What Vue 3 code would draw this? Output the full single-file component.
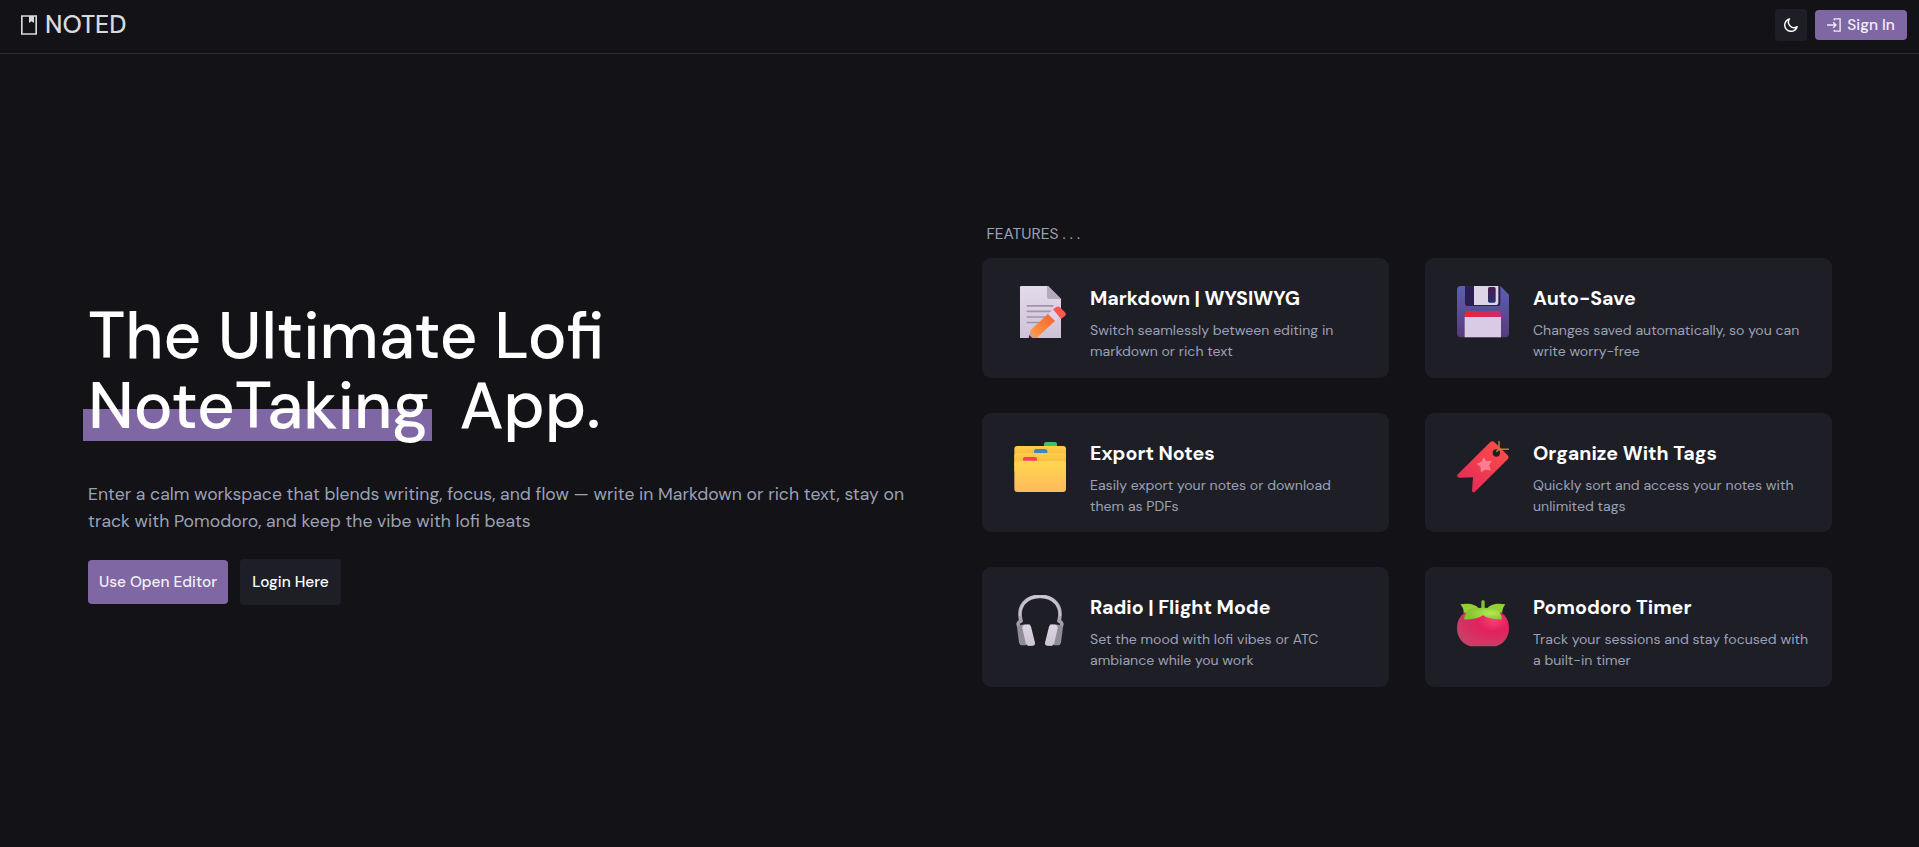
<script setup>
const features = [
  { icon: 'memo', title: 'Markdown | WYSIWYG', lines: ['Switch seamlessly between editing in', 'markdown or rich text'] },
  { icon: 'disk', title: 'Auto-Save', lines: ['Changes saved automatically, so you can', 'write worry-free'] },
  { icon: 'folder', title: 'Export Notes', lines: ['Easily export your notes or download', 'them as PDFs'] },
  { icon: 'tag', title: 'Organize With Tags', lines: ['Quickly sort and access your notes with', 'unlimited tags'] },
  { icon: 'phones', title: 'Radio | Flight Mode', lines: ['Set the mood with lofi vibes or ATC', 'ambiance while you work'] },
  { icon: 'tomato', title: 'Pomodoro Timer', lines: ['Track your sessions and stay focused with', 'a built-in timer'] },
]
</script>

<template>
  <div class="page">
    <header class="topbar">
      <div class="brand">
        <svg class="book" viewBox="0 0 16 20"><path d="M.8 1H15.200V19H.8Z" fill="none" stroke="#d9d9dc" stroke-width="1.700" /><path d="M8 1h5v7l-2.500-1.800L8 8Z" fill="#d9d9dc" /></svg>
        <span class="brand-name">NOTED</span>
      </div>
      <div class="actions">
        <button class="icon-btn" aria-label="Toggle theme">
          <svg width="14" height="14" viewBox="0 0 14 14"><path d="M5.400.9A6.300 6.300 0 1 0 13.100 8.700 5.600 5.600 0 0 1 5.400.9Z" fill="none" stroke="#fff" stroke-width="1.400" stroke-linejoin="round" /></svg>
        </button>
        <button class="sign-in">
          <svg width="14" height="14" viewBox="0 0 14 14" fill="none" stroke="#efeaf6" stroke-width="1.400"><path d="M7.300 2.200V.9h5.800v12.200H7.300v-1.300M0 7h8.800M6.200 4.200 9 7 6.200 9.800" /></svg>
          <span>Sign In</span>
        </button>
      </div>
    </header>

    <main class="content">
      <section class="hero">
        <h1>
          <span class="line">The Ultimate Lofi</span>
          <span class="line"><span class="mark">NoteTaking</span><span class="app">App.</span></span>
        </h1>
        <p class="lead">
          <span class="line">Enter a calm workspace that blends writing, focus, and flow — write in Markdown or rich text, stay on</span>
          <span class="line">track with Pomodoro, and keep the vibe with lofi beats</span>
        </p>
        <div class="cta">
          <button class="primary">Use Open Editor</button>
          <button class="secondary">Login Here</button>
        </div>
      </section>

      <section class="features">
        <h2>FEATURES . . .</h2>
        <div class="cards">
          <article v-for="f in features" :key="f.icon" class="card">
            <svg v-if="f.icon === 'memo'" class="art" viewBox="42 48 156 156">
              <defs>
                <linearGradient id="sheet" x1="0" y1="0" x2="0" y2="1"><stop offset="0" stop-color="#e3dbea" /><stop offset="1" stop-color="#cfc2d8" /></linearGradient>
                <linearGradient id="pencil" x1="0" y1="1" x2="1" y2="0"><stop offset="0" stop-color="#ffa04a" /><stop offset="1" stop-color="#f4602f" /></linearGradient>
              </defs>
              <path d="M60 52q0-4 4-4H144L183 87V204H60Z" fill="url(#sheet)" />
              <path d="M141 48h3L183 87H147q-6 0-6-6Z" fill="#b5a9bd" />
              <path d="M82 107.500H159M82 124H159M82 141H145M82 157.500H127" stroke="#a094aa" stroke-width="5" stroke-linecap="round" />
              <path d="M92 180 146 130 167 151 110 204H88Z" fill="url(#pencil)" />
              <path d="M92 180 110 204H86Z" fill="#d9a07e" />
              <path d="M88 195l9 9H86Z" fill="#4b1f4d" />
              <path d="M144 132 160 117 182 138 165 153Z" fill="#ded3ea" />
              <path d="M159 118 169 111q6-4 11 1l15 15q5 6 0 11l-12 9Z" fill="#fa5750" />
            </svg>
            <svg v-else-if="f.icon === 'disk'" class="art" viewBox="42 50 156 156">
              <defs>
                <linearGradient id="body" x1="0" y1="0" x2="0" y2="1"><stop offset="0" stop-color="#5a61b0" /><stop offset="1" stop-color="#593a7c" /></linearGradient>
                <linearGradient id="stripe"><stop offset="0" stop-color="#ed2431" /><stop offset="1" stop-color="#c92b70" /></linearGradient>
                <linearGradient id="slot" x1="0" y1="0" x2="0" y2="1"><stop offset="0" stop-color="#4d1a4b" /><stop offset="1" stop-color="#243070" /></linearGradient>
              </defs>
              <path d="M42 62q0-12 12-12H172L198 76V192q0 12-12 12H54q-12 0-12-12Z" fill="url(#body)" />
              <path d="M66 50H172V103q0 7-7 7H73q-7 0-7-7Z" fill="#2b1e52" />
              <path d="M93 50H166V101q0 6-6 6H93Z" fill="#ddd4e6" />
              <rect x="135" y="53" width="23" height="47" rx="5" fill="url(#slot)" />
              <path d="M65 134q0-9 9-9H165q9 0 9 9V146H65Z" fill="url(#stripe)" />
              <path d="M65 143H174V204H65Z" fill="#d9cae5" />
            </svg>
            <svg v-else-if="f.icon === 'folder'" class="art" viewBox="42 48 156 156">
              <defs>
                <linearGradient id="fold" x1="0" y1="0" x2="0" y2="1"><stop offset="0" stop-color="#ffd64e" /><stop offset="1" stop-color="#ffba5c" /></linearGradient>
                <linearGradient id="sheaf" x1="0" y1="0" x2="0" y2="1"><stop offset="0" stop-color="#ffcf45" /><stop offset=".4" stop-color="#f9bb45" /></linearGradient>
              </defs>
              <path d="M132 65V57q0-6 6-6H165q6 0 6 6V65Z" fill="#43bd69" />
              <rect x="43" y="63" width="155" height="60" rx="9" fill="url(#sheaf)" />
              <path d="M102 84V79q0-7 7-7H135q7 0 7 7V84Z" fill="#3f85c6" />
              <rect x="43" y="84" width="155" height="60" rx="9" fill="url(#sheaf)" />
              <path d="M69 108V102q0-6 6-6H105q6 0 6 6V108Z" fill="#ff3b63" />
              <rect x="43" y="107" width="155" height="94" rx="9" fill="url(#fold)" />
            </svg>
            <svg v-else-if="f.icon === 'tag'" class="art" viewBox="42 48 156 156">
              <defs>
                <linearGradient id="ribbon" x1="1" y1="0" x2="0" y2="1"><stop offset="0" stop-color="#ff5148" /><stop offset="1" stop-color="#e22659" /></linearGradient>
              </defs>
              <path fill-rule="evenodd" d="M43 149 142 51q6-5 12 0L194 91q5 6 0 12L96 200q-7 4-9-2L90 157 49 158q-8-1-6-9ZM171 84a11 11 0 1 0-22 0 11 11 0 1 0 22 0Z" fill="url(#ribbon)" />
              <path d="M168 45V73H198M168 73 160 80" fill="none" stroke="#c07a35" stroke-width="4.500" />
              <path d="m122 98 7 12 15-1-7 12 5 14-14-3-13 8-1-15-11-8 14-6Z" fill="#ff7d93" stroke="#ff7d93" stroke-width="3" stroke-linejoin="round" />
            </svg>
            <svg v-else-if="f.icon === 'phones'" class="art" viewBox="42 45 156 156">
              <defs>
                <linearGradient id="band" x1="0" y1="0" x2="0" y2="1"><stop offset="0" stop-color="#c3bcc7" /><stop offset="1" stop-color="#a09aa4" /></linearGradient>
                <linearGradient id="cup" x1="0" y1="0" x2="0" y2="1"><stop offset="0" stop-color="#ddd6e3" /><stop offset="1" stop-color="#cdc4d3" /></linearGradient>
              </defs>
              <path d="M57 140Q50 128 63 123C51 78 78 49 120 49S189 78 177 123Q190 128 183 140" fill="none" stroke="url(#band)" stroke-width="11" stroke-linejoin="round" />
              <path d="M59 108C61 72 85 49 120 49S179 72 181 108" fill="none" stroke="#d9d3dc" stroke-width="3" />
              <path d="M51 141q1-6 9-6l18-2V196H66q-7 0-9-8Z" fill="#918b96" />
              <path d="M189 141q-1-6-9-6l-18-2V196h12q7 0 9-8Z" fill="#918b96" />
              <path d="M67 143q0-8 8-9l9-1q7 0 9 7l12 48q1 8-7 9l-12 1q-7 0-9-8Z" fill="url(#cup)" />
              <path d="M173 143q0-8-8-9l-9-1q-7 0-9 7l-12 48q-1 8 7 9l12 1q7 0 9-8Z" fill="url(#cup)" />
            </svg>
            <svg v-else class="art" viewBox="42 44 156 156">
              <defs>
                <radialGradient id="fruit" cx=".7" cy=".28" r=".75"><stop offset="0" stop-color="#f2426f" /><stop offset=".4" stop-color="#e3205e" /><stop offset="1" stop-color="#cb3d66" /></radialGradient>
                <radialGradient id="leaf" cx=".7" cy=".45" r=".6"><stop offset="0" stop-color="#b6ea55" /><stop offset="1" stop-color="#86c42f" /></radialGradient>
              </defs>
              <path d="M42 143C42 110 62 91 95 91H145C178 91 198 110 198 143 198 172 182 190 158 198H82C58 190 42 172 42 143Z" fill="url(#fruit)" />
              <path d="M52 72C75 68 98 70 109 86L95 97H62Q63 84 52 72Z" fill="#93cf35" />
              <path d="M187 72C164 68 142 70 131 86L145 97H177Q177 84 187 72Z" fill="#93cf35" />
              <path d="M115 64q0-4 5-4t5 4V88H115Z" fill="#86c32c" />
              <path d="M63 117Q67 90 85 85Q120 80 157 85Q173 91 177 117Q137 119 120 105Q103 119 63 117Z" fill="url(#leaf)" />
            </svg>
            <div class="copy">
              <h3>{{ f.title }}</h3>
              <p><span v-for="l in f.lines" :key="l" class="line">{{ l }}</span></p>
            </div>
          </article>
        </div>
      </section>
    </main>
  </div>
</template>

<style>
html, body { margin: 0; background: #131217; }
</style>

<style scoped>
.page { height: 847px; overflow: hidden; background: #131217; color: #fff; font-family: "DM Sans", Inter, sans-serif; }
.topbar { box-sizing: border-box; height: 54px; padding: 0 12px 0 21px; display: flex; align-items: flex-start; justify-content: space-between; border-bottom: 1px solid #2b2938; }
.brand { display: flex; align-items: center; gap: 8px; height: 49px; color: #d9d9dc; }
.book { width: 16px; height: 20px; }
.brand-name { font-size: 24.800px; line-height: 30px; font-weight: 500; }
.actions { display: flex; align-items: center; gap: 8px; padding-top: 9px; }
button { border: 0; padding: 0; font-family: inherit; font-size: 15.400px; font-weight: 500; display: flex; align-items: center; justify-content: center; white-space: nowrap; }
.icon-btn { width: 32px; height: 32px; border-radius: 4px; background: #1e1e27; }
.sign-in { width: 92px; height: 30px; gap: 6px; border-radius: 4px; background: #7e67a2; color: #f3eff8; }
.content { display: grid; grid-template-columns: 894px 850px; padding: 168px 0 0 88px; }
.line { display: block; white-space: nowrap; }
h1, h2, h3, p { margin: 0; }
.hero { padding-top: 79px; }
h1 { font-size: 65.200px; line-height: 70px; font-weight: 500; }
.mark { display: inline-block; margin-left: -5px; padding: 0 3px 0 5px; background: linear-gradient(#7e67a2, #7e67a2) 0 38px / 100% 32px no-repeat; }
.app { margin-left: 27px; }
.lead { margin-top: 40px; color: #9ca1b5; font-size: 17.600px; line-height: 27px; }
.cta { display: flex; align-items: center; gap: 12px; margin-top: 24px; }
.cta button { border-radius: 4px; }
.cta .primary { width: 140px; height: 44px; background: #7e67a2; color: #f3eff8; }
.cta .secondary { width: 101px; height: 46px; background: #1e1e27; color: #fff; }
h2 { height: 36px; padding-left: 4.500px; color: #9ca1b5; font-size: 15.500px; line-height: 24px; font-weight: 400; }
.cards { display: grid; grid-template-columns: 407px 407px; grid-auto-rows: 119.500px; gap: 35px 36px; }
.card { box-sizing: border-box; padding: 28px 0 0 32px; display: flex; align-items: flex-start; gap: 24px; border-radius: 9px; background: #1e1e27; }
.art { width: 52px; height: 52px; flex: none; }
h3 { font-size: 19.600px; line-height: 25px; font-weight: 700; white-space: nowrap; }
.copy p { margin-top: 9px; color: #9ca1b5; font-size: 14.080px; line-height: 21px; }
</style>
